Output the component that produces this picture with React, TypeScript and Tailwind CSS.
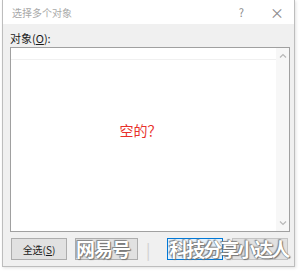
import React from "react";

const cjk = { fontFamily: '"Noto Sans CJK SC", "Noto Sans", sans-serif' };

function Chevron({ up }: { up?: boolean }) {
  return (
    <svg width="8" height="5" viewBox="0 0 8 5" className="text-[#b8b8b8]">
      <path
        d={up ? "M1 4.5 L4 1.5 L7 4.5" : "M1 0.5 L4 3.5 L7 0.5"}
        fill="none"
        stroke="currentColor"
        strokeWidth="1.2"
      />
    </svg>
  );
}

export default function App() {
  return (
    <div className="relative h-[275px] w-[300px] overflow-hidden bg-white" style={cjk}>
      <div className="ml-[2px] flex h-[267px] w-[293px] flex-col border border-t-0 border-[#bdbdbd] bg-[#f0f0f0] shadow-[1px_1px_3px_rgba(0,0,0,0.12)]">
        <div className="flex h-[24px] shrink-0 items-center bg-white pl-[9px] pr-[10px] text-[10px] text-[#a8a8a8]">
          <span className="flex-1">选择多个对象</span>
          <span className="mr-[26px] text-[11px] text-[#8a8a8a]">?</span>
          <span className="text-[14px] leading-none text-[#8a8a8a]">×</span>
        </div>
        <div className="flex flex-1 flex-col pl-[7px] pr-[4px]">
          <div className="mt-[6px] h-[17px] text-[11px] leading-[17px] text-[#1a1a1a]">
            对象(<span className="underline">O</span>):
          </div>
          <div className="flex h-[185px] border border-[#a0a0a0] bg-white">
            <div className="flex flex-1 flex-col">
              <div className="h-[12px] border-b border-[#f0f0f0]" />
              <div className="flex flex-1 items-center justify-center pb-[30px] pr-[6px]">
                <span className="text-[14px] text-[#e8302a]">空的？</span>
              </div>
            </div>
            <div className="flex w-[13px] flex-col items-center justify-between bg-[#f7f7f7] py-[5px]">
              <Chevron up />
              <Chevron />
            </div>
          </div>
          <div className="relative mt-[6px] flex gap-[8px] pl-[1px]">
            <div className="flex h-[22px] w-[56px] items-center justify-center border border-[#adadad] bg-[#e1e1e1] text-[10px] text-[#1a1a1a]">
              全选(<span className="underline">S</span>)
            </div>
            <div className="h-[22px] w-[63px] border border-[#adadad] bg-[#e1e1e1]" />
            <div className="ml-[21px] h-[22px] w-[56px] border border-[#0078d7] bg-[#e5f1fb]" />
            <div className="ml-[1px] h-[22px] w-[56px] border border-[#c4c4c4] bg-[#e1e1e1]" />
            <div className="pointer-events-none absolute left-[66px] top-[-1px] flex items-center whitespace-nowrap text-[19px] font-bold leading-[24px] text-white [text-shadow:0_0_1px_#666,1px_1px_1px_#777,-1px_-1px_1px_#888]">
              <span className="tracking-[-1px]">网易号</span>
              <span className="ml-[16px] mr-[19px] text-[16px] font-normal text-[#cfcfcf] [text-shadow:none]">|</span>
              <span className="tracking-[-2px]">科技分享小达人</span>
            </div>
          </div>
        </div>
      </div>
    </div>
  );
}
